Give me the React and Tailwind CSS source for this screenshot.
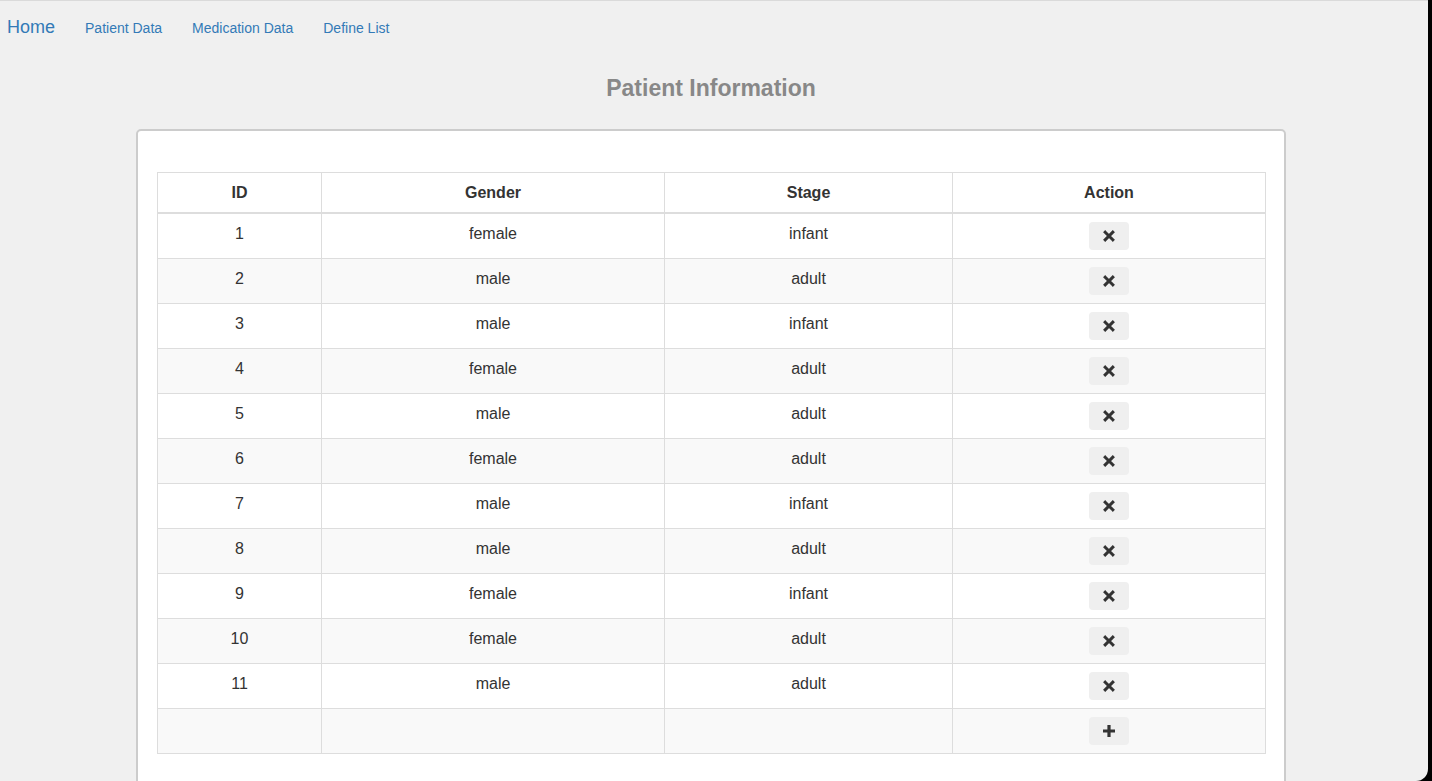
import React from 'react';

const patients = [
  { id: 1, gender: 'female', stage: 'infant' },
  { id: 2, gender: 'male', stage: 'adult' },
  { id: 3, gender: 'male', stage: 'infant' },
  { id: 4, gender: 'female', stage: 'adult' },
  { id: 5, gender: 'male', stage: 'adult' },
  { id: 6, gender: 'female', stage: 'adult' },
  { id: 7, gender: 'male', stage: 'infant' },
  { id: 8, gender: 'male', stage: 'adult' },
  { id: 9, gender: 'female', stage: 'infant' },
  { id: 10, gender: 'female', stage: 'adult' },
  { id: 11, gender: 'male', stage: 'adult' },
];

// glyphicon-style bold cross
const RemoveIcon = () => (
  <svg width="12" height="12" viewBox="0 0 12 12" className="text-[#333]">
    <path d="M2.2 2.2 L9.8 9.8 M9.8 2.2 L2.2 9.8" stroke="currentColor" strokeWidth="3" strokeLinecap="square" />
  </svg>
);

const PlusIcon = () => (
  <svg width="14" height="14" viewBox="0 0 14 14" className="text-[#333]">
    <path d="M7 1 V13 M1 7 H13" stroke="currentColor" strokeWidth="3.2" />
  </svg>
);

const ActionButton = ({ children }) => (
  <button className="w-[40px] h-[28px] bg-[#efefef] rounded-[4px] inline-flex items-center justify-center border-0 cursor-pointer">
    {children}
  </button>
);

const cell = 'border border-[#ddd] px-[8px] pt-[10px] pb-[6px] leading-[20px] text-center align-top';

export default function App() {
  return (
    <div className="w-[1432px] h-[781px] bg-black overflow-hidden" style={{ fontFamily: '"Liberation Sans", Arial, sans-serif' }}>
      <div className="w-[1428px] h-full bg-[#f0f0f0] rounded-br-[12px] border-t border-[#dadada] overflow-hidden">
        <div className="w-[1422px]">
          {/* Nav */}
          <nav className="flex items-baseline gap-[30px] pl-[7px] pt-[16px]">
            <a className="text-[18px] leading-[20px] text-[#337ab7]">Home</a>
            <a className="text-[14px] leading-[20px] text-[#337ab7]">Patient Data</a>
            <a className="text-[14px] leading-[20px] text-[#337ab7]">Medication Data</a>
            <a className="text-[14px] leading-[20px] text-[#337ab7]">Define List</a>
          </nav>

          <h1 className="mt-[37px] text-center text-[23px] leading-[26px] font-bold text-[#888]">Patient Information</h1>

          {/* Card */}
          <div className="mt-[28px] ml-[136px] w-[1150px] bg-white border-2 border-[#cccccc] rounded-[5px] pt-[41px] px-[19px] pb-[40px]">
            <table className="w-[1108px] table-fixed border-collapse border border-[#ddd] text-[16px] text-[#333]">
              <colgroup>
                <col className="w-[164px]" />
                <col className="w-[343px]" />
                <col className="w-[288px]" />
                <col className="w-[313px]" />
              </colgroup>
              <thead>
                <tr className="border-b-2 border-[#ddd]">
                  {['ID', 'Gender', 'Stage', 'Action'].map(h => (
                    <th key={h} className="border border-[#ddd] border-b-2 pt-[10px] pb-[9px] px-[8px] leading-[20px] font-bold text-center">{h}</th>
                  ))}
                </tr>
              </thead>
              <tbody>
                {patients.map((p, i) => (
                  <tr key={p.id} className={i % 2 === 1 ? 'bg-[#f9f9f9]' : 'bg-white'}>
                    <td className={cell}>{p.id}</td>
                    <td className={cell}>{p.gender}</td>
                    <td className={cell}>{p.stage}</td>
                    <td className="border border-[#ddd] p-[8px] leading-[20px] text-center align-top">
                      <ActionButton><RemoveIcon /></ActionButton>
                    </td>
                  </tr>
                ))}
                <tr className="bg-[#f9f9f9]">
                  <td className={cell}></td>
                  <td className={cell}></td>
                  <td className={cell}></td>
                  <td className="border border-[#ddd] p-[8px] leading-[20px] text-center align-top">
                    <ActionButton><PlusIcon /></ActionButton>
                  </td>
                </tr>
              </tbody>
            </table>
          </div>
        </div>
      </div>
    </div>
  );
}
